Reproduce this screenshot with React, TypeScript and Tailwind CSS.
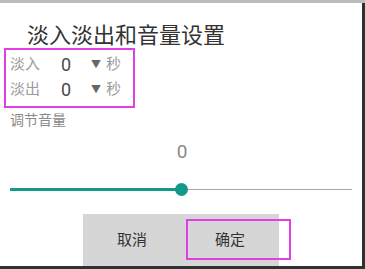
import React from "react";

const font = { fontFamily: '"Roboto", "Noto Sans CJK SC", sans-serif' };

const TimeRow = ({ label }: { label: string }) => (
  <div className="flex items-center h-[25px]">
    <span className="w-[51px] text-[15px] text-[#9b9b9b]">{label}</span>
    <span className="w-[30px] text-[18px] text-[#4a4a4a]">0</span>
    <span className="w-[15px] text-[10px] text-[#666]">▼</span>
    <span className="text-[15px] text-[#9b9b9b]">秒</span>
  </div>
);

const App = () => {
  return (
    <div className="w-[365px] h-[269px] bg-[#2b3434] overflow-hidden relative" style={font}>
      <div className="h-[3px] bg-[#b9bebb]" />
      <div className="w-[362px] h-[263px] bg-white flex flex-col">
        <h1 className="mt-[22px] ml-[27px] text-[22px] leading-[22px] text-[#333]">
          淡入淡出和音量设置
        </h1>
        <div className="mt-[5px] ml-[10px] flex flex-col">
          <TimeRow label="淡入" />
          <TimeRow label="淡出" />
        </div>
        <div className="mt-[8px] ml-[10px] text-[14px] leading-[20px] text-[#8a8a8a]">调节音量</div>
        <div className="mt-[11px] text-center pl-[2px] text-[19px] leading-[22px] text-[#8a8a8a]">0</div>
        <div className="mt-[19px] mx-[10px] h-[14px] flex items-center">
          <div className="w-[171px] h-[3px] bg-[#12998a]" />
          <div className="w-[13px] h-[13px] -mx-[6px] rounded-full bg-[#12998a] relative" />
          <div className="flex-1 h-px bg-[#a8a8a8]" />
        </div>
        <div className="mt-auto ml-[83px] w-[196px] h-[52px] bg-[#d6d6d6] flex">
          <button className="flex-1 text-[15px] text-[#333]">取消</button>
          <button className="flex-1 text-[15px] text-[#333]">确定</button>
        </div>
      </div>
      <div className="absolute left-[4px] top-[48px] w-[131px] h-[60px] border-2 border-[#e23ee6]" />
      <div className="absolute left-[186px] top-[219px] w-[105px] h-[41px] border-2 border-[#e23ee6]" />
    </div>
  );
};

export default App;
